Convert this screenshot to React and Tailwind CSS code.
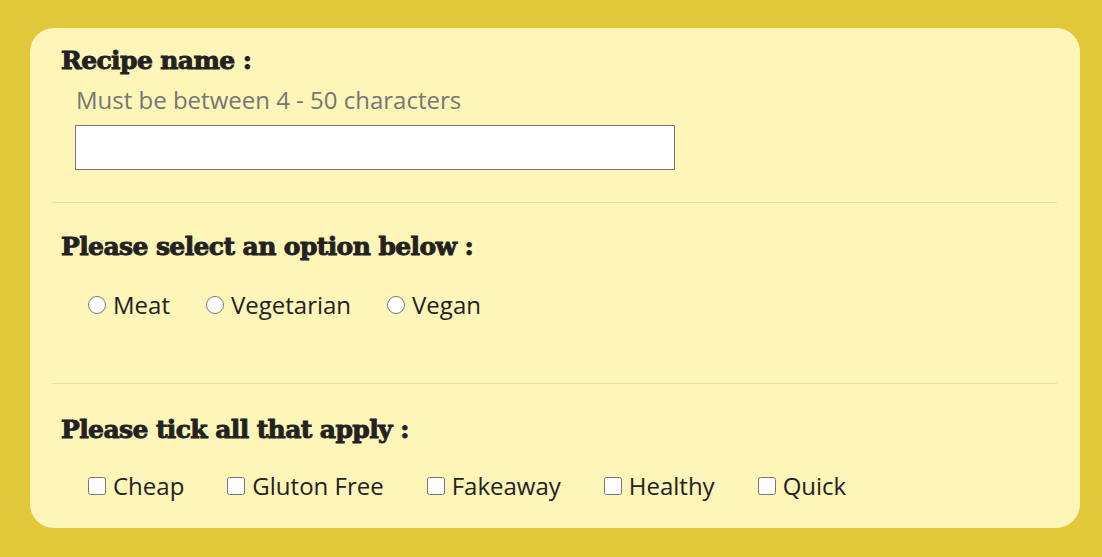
const heading =
  "font-['DejaVu_Serif',serif] font-extrabold text-[25px] leading-[24px] tracking-[-0.6px] text-[#222] [-webkit-text-stroke:0.9px_#222]"

function Choice({ type, name, label, gap }) {
  return (
    <label className={`flex items-center ${gap}`}>
      <input type={type} name={name} className="m-0 h-[18px] w-[18px] accent-gray-500" />
      <span className="ml-[7px]">{label}</span>
    </label>
  )
}

export default function App() {
  const diets = ['Meat', 'Vegetarian', 'Vegan']
  const tags = ['Cheap', 'Gluton Free', 'Fakeaway', 'Healthy', 'Quick']

  return (
    <div className="min-h-[557px] bg-[#e0c83a] pl-[30px] pr-[22px] pt-[28px] pb-[30px] font-['Open_Sans',sans-serif]">
      <form className="rounded-[24px] bg-[#fef5b8] pl-[22px] pr-[23px]">
        <section className="border-b border-[#e9dfa6] pl-[9px] pt-[21px] pb-[32px]">
          <h2 className={heading}>Recipe name :</h2>
          <p className="ml-[15px] mt-[15px] text-[24px] leading-[24px] text-[#767676]">
            Must be between 4 - 50 characters
          </p>
          <input
            type="text"
            className="ml-[14px] mt-[13px] block h-[45px] w-[600px] border border-[#767676] bg-white"
          />
        </section>

        <section className="border-b border-[#e9dfa6] pl-[9px] pt-[32px] pb-[66px]">
          <h2 className={heading}>Please select an option below :</h2>
          <div className="ml-[27px] mt-[34px] flex text-[24px] leading-[24px] text-[#222]">
            {diets.map((d) => (
              <Choice key={d} type="radio" name="diet" label={d} gap="mr-[36px]" />
            ))}
          </div>
        </section>

        <section className="pl-[9px] pt-[34px] pb-[30px]">
          <h2 className={heading}>Please tick all that apply :</h2>
          <div className="ml-[27px] mt-[32px] flex text-[24px] leading-[24px] text-[#222]">
            {tags.map((t) => (
              <Choice key={t} type="checkbox" name="tags" label={t} gap="mr-[43px]" />
            ))}
          </div>
        </section>
      </form>
    </div>
  )
}
